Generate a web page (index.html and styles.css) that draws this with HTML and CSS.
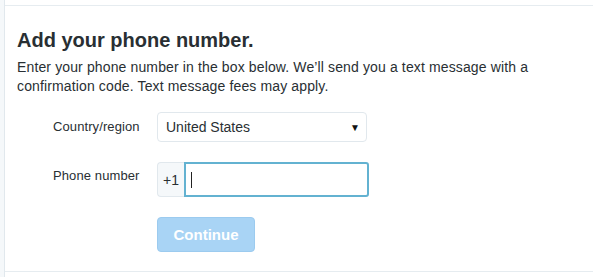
FILE: index.html
```html
<!DOCTYPE html>
<html>
<head>
<meta charset="utf-8">
<link rel="stylesheet" href="styles.css">
</head>
<body>
<div class="column">
  <div class="panel">
    <h1 class="title">Add your phone number.</h1>
    <p class="intro">Enter your phone number in the box below. We’ll send you a text message with a confirmation code. Text message fees may apply.</p>
    <div class="form">
      <div class="row">
        <label class="label label-country">Country/region</label>
        <div class="select">
          <span class="select-value">United States</span>
          <span class="caret">▼</span>
        </div>
      </div>
      <div class="row">
        <label class="label label-phone">Phone number</label>
        <div class="phone">
          <span class="prefix">+1</span>
          <div class="input"><span class="cursor"></span></div>
        </div>
      </div>
      <div class="row">
        <span class="label"></span>
        <button class="btn">Continue</button>
      </div>
    </div>
  </div>
</div>
</body>
</html>
```
FILE: styles.css
```css
html, body {
  margin: 0;
  padding: 0;
  height: 100%;
}
body {
  background: #f5f8fa;
  font-family: "Liberation Sans", Arial, sans-serif;
  color: #292f33;
}
.column {
  margin-left: 4px;
  border-left: 1px solid #e1e8ed;
  background: #fff;
  height: 100%;
  padding-top: 5px;
  box-sizing: border-box;
}
.panel {
  border-top: 1px solid #e6ecf0;
  border-bottom: 1px solid #e6ecf0;
  height: 267px;
  box-sizing: border-box;
  padding: 22px 12px 0 12px;
}
.title {
  margin: 0;
  font-size: 20px;
  line-height: 24px;
  font-weight: bold;
}
.intro {
  margin: 6px 0 0 0;
  font-size: 14px;
  line-height: 19px;
  letter-spacing: 0.13px;
}
.form {
  margin: 16px 0 0 36px;
  display: flex;
  flex-direction: column;
  gap: 20px;
}
.row {
  display: flex;
  align-items: flex-start;
}
.label {
  width: 104px;
  flex: none;
  font-size: 13px;
  line-height: 16px;
  letter-spacing: 0.1px;
}
.label-country {
  padding-top: 7px;
}
.label-phone {
  padding-top: 6px;
}
.select {
  width: 210px;
  height: 30px;
  box-sizing: border-box;
  border: 1px solid #e1e8ed;
  border-radius: 4px;
  display: flex;
  align-items: center;
  justify-content: space-between;
  padding: 0 6px 0 8px;
  font-size: 14px;
}
.caret {
  font-size: 10px;
  color: #111;
}
.phone {
  display: flex;
  height: 35px;
}
.prefix {
  width: 27px;
  box-sizing: border-box;
  background: #f5f8fa;
  border: 1px solid #e1e8ed;
  border-right: none;
  border-radius: 4px 0 0 4px;
  font-size: 14px;
  display: flex;
  align-items: center;
  padding-left: 5px;
}
.input {
  width: 185px;
  box-sizing: border-box;
  border: 2px solid #63b2d1;
  border-radius: 0 3px 3px 0;
  display: flex;
  align-items: center;
  padding-left: 5px;
}
.cursor {
  width: 1px;
  height: 16px;
  background: #222;
}
.btn {
  width: 98px;
  height: 35px;
  background: #a9d4f5;
  border: 1px solid #9ccbef;
  border-radius: 4px;
  color: #fff;
  font-family: "Liberation Sans", Arial, sans-serif;
  font-weight: bold;
  font-size: 15px;
  padding: 0;
}
```
